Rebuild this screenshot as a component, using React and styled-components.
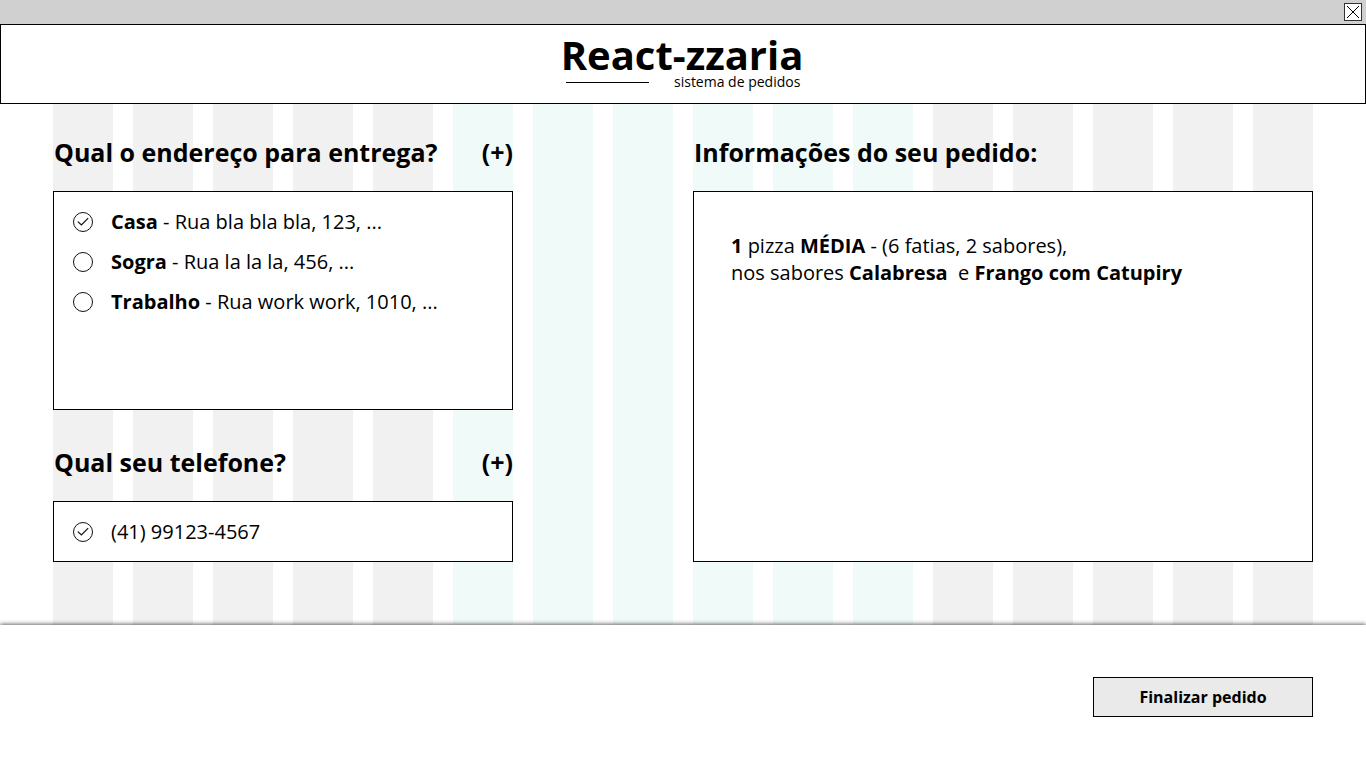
import React from 'react';
import styled, { createGlobalStyle } from 'styled-components';

const GlobalStyle = createGlobalStyle`
  *, *::before, *::after { box-sizing: border-box; }
  body {
    margin: 0;
    background: #fff;
    color: #000;
    font-family: 'Open Sans', 'Noto Sans', sans-serif;
    font-size: 20px;
    line-height: 27px;
  }
`;

const Page = styled.div`
  display: flex;
  flex-direction: column;
  min-height: 100vh;
`;

const TitleBar = styled.div`
  display: flex;
  justify-content: flex-end;
  align-items: center;
  height: 24px;
  padding: 0 4px;
  background: #d0d0d0;
`;

const CloseButton = styled.button`
  display: grid;
  place-items: center;
  width: 18px;
  height: 18px;
  padding: 0;
  border: 1px solid #333;
  background: #fff;
`;

const Header = styled.header`
  display: flex;
  justify-content: center;
  height: 80px;
  padding: 10px 2px 0 0;
  border: 1px solid #000;
  background: #fff;
`;

const Brand = styled.div`
  display: flex;
  flex-direction: column;
`;

const BrandName = styled.h1`
  margin: 0;
  font-size: 40px;
  line-height: 40px;
  font-weight: 700;
`;

const Tagline = styled.div`
  display: flex;
  justify-content: space-between;
  align-items: center;
  padding: 0 3px 0 5px;
  font-size: 14px;
  line-height: 14px;
`;

const Rule = styled.span`
  width: 83px;
  height: 1px;
  background: #000;
`;

const Main = styled.main`
  flex: 1;
  display: grid;
`;

const Grid = styled.div`
  grid-area: 1 / 1;
  display: grid;
  grid-template-columns: repeat(16, minmax(0, 1fr));
  column-gap: 20px;
  padding: 0 53px;
`;

const Column = styled.div`
  background: ${(p) => (p.$accent ? '#f0faf9' : '#f1f1f1')};
`;

const Area = styled.div`
  grid-column: ${(p) => p.$span};
  display: flex;
  flex-direction: column;
  gap: 35px;
  padding: 31px 0 63px;
`;

const Section = styled.section`
  display: flex;
  flex-direction: column;
  flex: ${(p) => (p.$fill ? '1' : 'none')};
  gap: 22px;
`;

const SectionHead = styled.div`
  display: flex;
  justify-content: space-between;
  padding-left: 1px;
`;

const SectionTitle = styled.h2`
  margin: 0;
  font-size: 25px;
  line-height: 34px;
  font-weight: 700;
`;

const AddButton = styled.button`
  padding: 0;
  border: 0;
  background: none;
  color: inherit;
  font: 700 25px/34px 'Open Sans', 'Noto Sans', sans-serif;
`;

const Panel = styled.div`
  flex: 1;
  min-height: ${(p) => p.$min || '0'};
  padding: ${(p) => p.$pad};
  border: 1px solid #000;
  background: #fff;
`;

const Options = styled.div`
  display: flex;
  flex-direction: column;
  gap: 13px;
`;

const Option = styled.label`
  display: flex;
  align-items: center;
  gap: 18px;
`;

const RadioMark = styled.span`
  display: grid;
  flex: none;

  & > * { grid-area: 1 / 1; }
  & > svg { display: none; pointer-events: none; }
  & > input:checked + svg { display: block; }
`;

const RadioInput = styled.input`
  appearance: none;
  width: 20px;
  height: 20px;
  margin: 0;
  border: 1px solid #111;
  border-radius: 50%;
`;

const Order = styled.p`
  margin: 0;
  white-space: pre-wrap;
`;

const Footer = styled.footer`
  display: flex;
  justify-content: flex-end;
  padding: 52px 53px 51px;
  background: #fff;
  box-shadow: 0 -1px 4px rgba(0, 0, 0, 0.6);
`;

const SubmitButton = styled.button`
  min-width: 220px;
  height: 40px;
  padding: 0 16px;
  border: 1px solid #000;
  background: #eaeaea;
  color: #000;
  font: 700 16px/22px 'Open Sans', 'Noto Sans', sans-serif;
`;

const columns = Array.from({ length: 16 }, (_, i) => i >= 5 && i <= 10);

const addresses = [
  { id: 'casa', name: 'Casa', street: 'Rua bla bla bla, 123, ...' },
  { id: 'sogra', name: 'Sogra', street: 'Rua la la la, 456, ...' },
  { id: 'trabalho', name: 'Trabalho', street: 'Rua work work, 1010, ...' },
];

function Radio({ name, id, checked, children }) {
  return (
    <Option htmlFor={id}>
      <RadioMark>
        <RadioInput type="radio" id={id} name={name} defaultChecked={checked} />
        <svg width="20" height="20" viewBox="0 0 20 20" fill="none" stroke="#111" strokeWidth="1.2" aria-hidden="true">
          <path d="M4.8 9.6 L8.4 13 L15.2 6.2" />
        </svg>
      </RadioMark>
      <span>{children}</span>
    </Option>
  );
}

export default function App() {
  return (
    <Page>
      <GlobalStyle />
      <TitleBar>
        <CloseButton type="button" aria-label="Fechar">
          <svg width="14" height="14" viewBox="0 0 14 14" stroke="#000" strokeWidth="1" aria-hidden="true">
            <path d="M1 1 L13 13 M13 1 L1 13" />
          </svg>
        </CloseButton>
      </TitleBar>
      <Header>
        <Brand>
          <BrandName>React-zzaria</BrandName>
          <Tagline>
            <Rule />
            <span>sistema de pedidos</span>
          </Tagline>
        </Brand>
      </Header>
      <Main>
        <Grid aria-hidden="true">
          {columns.map((accent, i) => (
            <Column key={i} $accent={accent} />
          ))}
        </Grid>
        <Grid>
          <Area $span="1 / span 6">
            <Section>
              <SectionHead>
                <SectionTitle>Qual o endereço para entrega?</SectionTitle>
                <AddButton type="button">(+)</AddButton>
              </SectionHead>
              <Panel $min="219px" $pad="16px 19px">
                <Options role="radiogroup" aria-label="Endereço">
                  {addresses.map((a, i) => (
                    <Radio key={a.id} id={a.id} name="address" checked={i === 0}>
                      <b>{a.name}</b> - {a.street}
                    </Radio>
                  ))}
                </Options>
              </Panel>
            </Section>
            <Section>
              <SectionHead>
                <SectionTitle>Qual seu telefone?</SectionTitle>
                <AddButton type="button">(+)</AddButton>
              </SectionHead>
              <Panel $pad="16px 19px">
                <Radio id="phone" name="phone" checked>
                  (41) 99123-4567
                </Radio>
              </Panel>
            </Section>
          </Area>
          <Area $span="9 / span 8">
            <Section $fill>
              <SectionHead>
                <SectionTitle>Informações do seu pedido:</SectionTitle>
              </SectionHead>
              <Panel $pad="40px 37px">
                <Order>
                  <b>1</b> pizza <b>MÉDIA</b> - (6 fatias, 2 sabores),
                  <br />
                  nos sabores <b>Calabresa</b>{'  e '}<b>Frango com Catupiry</b>
                </Order>
              </Panel>
            </Section>
          </Area>
        </Grid>
      </Main>
      <Footer>
        <SubmitButton type="submit">Finalizar pedido</SubmitButton>
      </Footer>
    </Page>
  );
}
